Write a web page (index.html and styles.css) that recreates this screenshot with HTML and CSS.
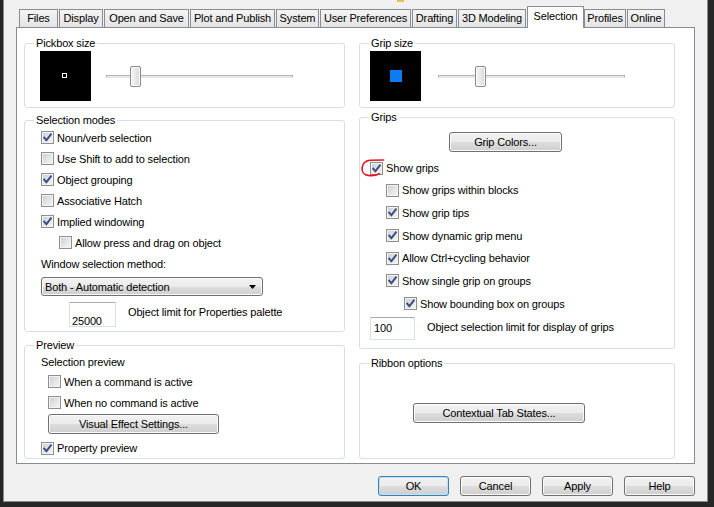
FILE: index.html
```html
<!DOCTYPE html>
<html>
<head>
<meta charset="utf-8">
<title>Options - Selection</title>
<link rel="stylesheet" href="styles.css">
</head>
<body>
<div class="window">
  <div class="topstrip"><span class="title-icon"></span></div>

  <div class="tabs">
    <div class="tab w-files">Files</div>
    <div class="tab w-display">Display</div>
    <div class="tab w-open">Open and Save</div>
    <div class="tab w-plot">Plot and Publish</div>
    <div class="tab w-system">System</div>
    <div class="tab w-user">User Preferences</div>
    <div class="tab w-draft">Drafting</div>
    <div class="tab w-3d">3D Modeling</div>
    <div class="tab active w-sel">Selection</div>
    <div class="tab w-prof">Profiles</div>
    <div class="tab w-online">Online</div>
  </div>

  <div class="page">
    <div class="col">
      <fieldset class="group g-size">
        <legend>Pickbox size</legend>
        <div class="size-row left-size">
          <div class="preview-box"><span class="pickbox"></span></div>
          <div class="slider"><div class="track"></div><div class="thumb" style="left:24px"></div></div>
        </div>
      </fieldset>

      <fieldset class="group g-modes">
        <legend>Selection modes</legend>
        <div class="rows rows-left">
          <div class="cb-row"><span class="cb checked"><svg viewBox="0 0 11 11" width="11" height="11"><path d="M2.2 5.6 L4.4 8.2 L8.9 2.4" /></svg></span>Noun/verb selection</div>
          <div class="cb-row"><span class="cb"></span>Use Shift to add to selection</div>
          <div class="cb-row"><span class="cb checked"><svg viewBox="0 0 11 11" width="11" height="11"><path d="M2.2 5.6 L4.4 8.2 L8.9 2.4" /></svg></span>Object grouping</div>
          <div class="cb-row"><span class="cb"></span>Associative Hatch</div>
          <div class="cb-row"><span class="cb checked"><svg viewBox="0 0 11 11" width="11" height="11"><path d="M2.2 5.6 L4.4 8.2 L8.9 2.4" /></svg></span>Implied windowing</div>
          <div class="cb-row indent1"><span class="cb"></span>Allow press and drag on object</div>
          <div class="label-row">Window selection method:</div>
          <div class="combo"><span>Both - Automatic detection</span><svg class="arrow" viewBox="0 0 7 4" width="7" height="4"><polygon points="0,0 7,0 3.5,4"/></svg></div>
          <div class="limit-row left-limit">
            <div class="tb tb-left">25000</div>
            <div class="limit-label">Object limit for Properties palette</div>
          </div>
        </div>
      </fieldset>

      <fieldset class="group g-preview">
        <legend>Preview</legend>
        <div class="rows rows-preview">
          <div class="label-row small">Selection preview</div>
          <div class="cb-row sub"><span class="cb"></span>When a command is active</div>
          <div class="cb-row sub"><span class="cb"></span>When no command is active</div>
          <div class="btn btn-visual">Visual Effect Settings...</div>
          <div class="cb-row prop"><span class="cb checked"><svg viewBox="0 0 11 11" width="11" height="11"><path d="M2.2 5.6 L4.4 8.2 L8.9 2.4" /></svg></span>Property preview</div>
        </div>
      </fieldset>
    </div>

    <div class="col">
      <fieldset class="group g-size">
        <legend>Grip size</legend>
        <div class="size-row right-size">
          <div class="preview-box"><span class="grip"></span></div>
          <div class="slider"><div class="track"></div><div class="thumb" style="left:37px"></div></div>
        </div>
      </fieldset>

      <fieldset class="group g-grips">
        <legend>Grips</legend>
        <div class="rows rows-right">
          <div class="btn btn-gripcolors">Grip Colors...</div>
          <div class="cb-row r-main"><span class="cb checked"><svg viewBox="0 0 11 11" width="11" height="11"><path d="M2.2 5.6 L4.4 8.2 L8.9 2.4" /></svg></span>Show grips
            <svg class="red-mark" viewBox="0 0 26 22" width="26" height="22"><path d="M23.5 3 L10 3.2 C5.5 3.6 2.6 6.5 2.1 10.8 C1.7 14.8 4.2 17.9 8.2 18.4 C12 18.9 16 18.5 19.5 16.8" /></svg>
          </div>
          <div class="cb-row r-sub"><span class="cb"></span>Show grips within blocks</div>
          <div class="cb-row r-sub"><span class="cb checked"><svg viewBox="0 0 11 11" width="11" height="11"><path d="M2.2 5.6 L4.4 8.2 L8.9 2.4" /></svg></span>Show grip tips</div>
          <div class="cb-row r-sub"><span class="cb checked"><svg viewBox="0 0 11 11" width="11" height="11"><path d="M2.2 5.6 L4.4 8.2 L8.9 2.4" /></svg></span>Show dynamic grip menu</div>
          <div class="cb-row r-sub"><span class="cb checked"><svg viewBox="0 0 11 11" width="11" height="11"><path d="M2.2 5.6 L4.4 8.2 L8.9 2.4" /></svg></span>Allow Ctrl+cycling behavior</div>
          <div class="cb-row r-sub"><span class="cb checked"><svg viewBox="0 0 11 11" width="11" height="11"><path d="M2.2 5.6 L4.4 8.2 L8.9 2.4" /></svg></span>Show single grip on groups</div>
          <div class="cb-row r-sub2"><span class="cb checked"><svg viewBox="0 0 11 11" width="11" height="11"><path d="M2.2 5.6 L4.4 8.2 L8.9 2.4" /></svg></span>Show bounding box on groups</div>
          <div class="limit-row right-limit">
            <div class="tb tb-right">100</div>
            <div class="limit-label">Object selection limit for display of grips</div>
          </div>
        </div>
      </fieldset>

      <fieldset class="group g-ribbon">
        <legend>Ribbon options</legend>
        <div class="rows rows-ribbon">
          <div class="btn btn-ctx">Contextual Tab States...</div>
        </div>
      </fieldset>
    </div>
  </div>

  <div class="footer">
    <div class="btn btn-foot default">OK</div>
    <div class="btn btn-foot">Cancel</div>
    <div class="btn btn-foot">Apply</div>
    <div class="btn btn-foot">Help</div>
  </div>
</div>
</body>
</html>
```

FILE: styles.css
```css
* { box-sizing: border-box; }

html, body { margin: 0; padding: 0; }

body {
  width: 714px;
  height: 507px;
  overflow: hidden;
  background: #262626;
  font-family: "Liberation Sans", Arial, sans-serif;
  font-size: 11px;
  letter-spacing: -0.15px;
  color: #000;
}

.window {
  margin-left: 3px;
  width: 705px;
  height: 502px;
  background: #f0f0f0;
  display: flex;
  flex-direction: column;
  box-shadow: inset 1px 0 #8a8a8a, inset -1px 0 #8a8a8a, inset 0 -1px #8a8a8a;
}

.topstrip { height: 6px; }
.title-icon {
  display: block;
  margin-left: 394px;
  width: 7px;
  height: 2px;
  background: #e4c158;
}

/* tabs */
.tabs {
  display: flex;
  align-items: flex-end;
  height: 21px;
  padding-left: 16px;
  position: relative;
  z-index: 1;
}
.tab {
  height: 18px;
  margin-right: 1px;
  border: 1px solid #898c95;
  border-bottom: none;
  background: linear-gradient(#f4f4f4, #e4e4e4);
  display: flex;
  align-items: center;
  justify-content: center;
  line-height: 13px;
  white-space: nowrap;
}
.tab.active {
  height: 22px;
  margin-bottom: -1px;
  padding-bottom: 2px;
  background: #fff;
}
.w-files { width: 39px; }
.w-display { width: 44px; }
.w-open { width: 85px; }
.w-plot { width: 85px; }
.w-system { width: 43px; }
.w-user { width: 91px; }
.w-draft { width: 45px; }
.w-3d { width: 68px; }
.w-sel { width: 57px; margin-right: 0; }
.w-prof { width: 42px; }
.w-online { width: 38px; }

/* tab page */
.page {
  margin-left: 13px;
  width: 679px;
  height: 437px;
  border: 1px solid #898c95;
  background: #fff;
  display: grid;
  grid-template-columns: 321px 316px;
  column-gap: 14px;
  align-content: start;
  padding: 9px 0 0 7px;
}
.col { display: flex; flex-direction: column; }

/* group boxes */
.group {
  margin: 0;
  padding: 0;
  min-width: 0;
  border: 1px solid #d5dfe5;
  border-radius: 3px;
}
.group legend {
  padding: 0 2px;
  margin-left: 9px;
  line-height: 13px;
}
.g-size { height: 71px; }
.g-modes { margin-top: 6px; height: 218px; }
.g-preview { margin-top: 7px; height: 120px; }
.g-grips { margin-top: 3px; height: 238px; }
.g-ribbon { margin-top: 8px; height: 102px; }

/* size previews and sliders */
.size-row { display: flex; align-items: center; padding-top: 1px; }
.left-size { padding-left: 15px; }
.left-size .slider { margin-left: 15px; }
.right-size { padding-left: 10px; }
.right-size .slider { margin-left: 17px; }

.preview-box {
  width: 51px;
  height: 50px;
  background: #000;
  display: flex;
  align-items: center;
  justify-content: center;
}
.pickbox {
  width: 5px;
  height: 5px;
  border: 1px solid #fff;
  margin-right: 2px;
  margin-bottom: 2px;
}
.grip {
  width: 12px;
  height: 12px;
  background: #0d7cf2;
}
.slider {
  position: relative;
  width: 187px;
  height: 21px;
}
.track {
  margin-top: 9px;
  height: 3px;
  border: 1px solid #b4b4b4;
  border-bottom-color: #e6e6e6;
  background: #e7eaea;
}
.thumb {
  position: absolute;
  top: 0;
  width: 11px;
  height: 21px;
  border: 1px solid #8a8a8a;
  border-radius: 2px;
  background: linear-gradient(90deg, #f6f6f6, #e6e6e6 60%, #d6d6d6);
  box-shadow: inset 0 0 0 1px #fafafa;
}

/* rows */
.rows { display: flex; flex-direction: column; align-items: flex-start; }
.cb-row {
  display: flex;
  align-items: center;
  height: 21px;
  white-space: nowrap;
  position: relative;
}
.rows-left .cb-row { padding-left: 16px; }
.rows-left .cb-row.indent1 { padding-left: 34px; }
.cb {
  width: 13px;
  height: 13px;
  margin-right: 3px;
  flex: none;
  border: 1px solid #8e8f8f;
  background: linear-gradient(135deg, #c9ccd1 0%, #e4e5e7 55%, #f7f7f7 100%);
  box-shadow: inset 0 0 0 1px #f3f3f3;
  display: flex;
  align-items: center;
  justify-content: center;
}
.cb svg path {
  fill: none;
  stroke: #3a4d82;
  stroke-width: 1.9;
  stroke-linecap: square;
  stroke-linejoin: miter;
}

.label-row {
  height: 21px;
  display: flex;
  align-items: center;
  padding-left: 16px;
}
.combo {
  margin-top: 3px;
  margin-left: 16px;
  width: 222px;
  height: 19px;
  border: 1px solid #707070;
  border-radius: 3px;
  background: linear-gradient(#f2f2f2 0%, #ebebeb 50%, #dddddd 50%, #cfcfcf 100%);
  box-shadow: inset 0 0 0 1px #fbfbfb;
  display: flex;
  align-items: center;
  justify-content: space-between;
  padding: 0 6px 0 3px;
}
.combo .arrow { fill: #000; }

.limit-row { display: flex; align-items: flex-start; }
.left-limit { margin-top: 6px; padding-left: 44px; }
.tb {
  border: 1px solid #dbdfe6;
  border-top-color: #abadb3;
  background: #fff;
}
.tb-left {
  width: 47px;
  height: 25px;
  padding: 12px 0 0 2px;
  line-height: 12px;
}
.left-limit .limit-label { margin: 4px 0 0 12px; line-height: 13px; }

/* preview group */
.rows-preview .label-row.small { height: 19px; }
.rows-preview .cb-row.sub { padding-left: 23px; }
.btn-visual { margin: 1px 0 0 23px; width: 171px; height: 20px; }
.rows-preview .cb-row.prop { margin-top: 4px; height: 20px; padding-left: 16px; }

/* buttons */
.btn {
  display: flex;
  align-items: center;
  justify-content: center;
  border: 1px solid #707070;
  border-radius: 3px;
  background: linear-gradient(#f2f2f2 0%, #ebebeb 50%, #dddddd 50%, #cfcfcf 100%);
  box-shadow: inset 0 0 0 1px #fbfbfb;
  white-space: nowrap;
  line-height: 13px;
}

/* grips group */
.btn-gripcolors { margin: 8px 0 0 89px; width: 113px; height: 20px; }
.rows-right .cb-row.r-main { margin-top: 5px; height: 22px; padding-left: 10px; }
.rows-right .cb-row.r-sub { height: 22.67px; padding-left: 26px; }
.rows-right .cb-row.r-sub2 { height: 22.67px; padding-left: 44px; }
.red-mark {
  position: absolute;
  left: 0;
  top: 0;
  overflow: visible;
}
.red-mark path {
  fill: none;
  stroke: #e3141b;
  stroke-width: 1.6;
  stroke-linecap: round;
}
.right-limit { margin-top: 2px; padding-left: 10px; align-items: center; }
.tb-right {
  width: 45px;
  height: 23px;
  padding: 0 0 0 3px;
  display: flex;
  align-items: center;
}
.right-limit .limit-label { margin: 0 0 2px 12px; }

/* ribbon */
.btn-ctx { margin: 33px 0 0 53px; width: 172px; height: 20px; }

/* footer */
.footer {
  display: flex;
  justify-content: flex-end;
  gap: 11px;
  margin-top: 12px;
  padding-right: 13px;
}
.btn-foot { width: 71px; height: 20px; }
.btn-foot.default {
  border-color: #3c7fb1;
  box-shadow: inset 0 0 0 1px #b9e3f7;
}
```
